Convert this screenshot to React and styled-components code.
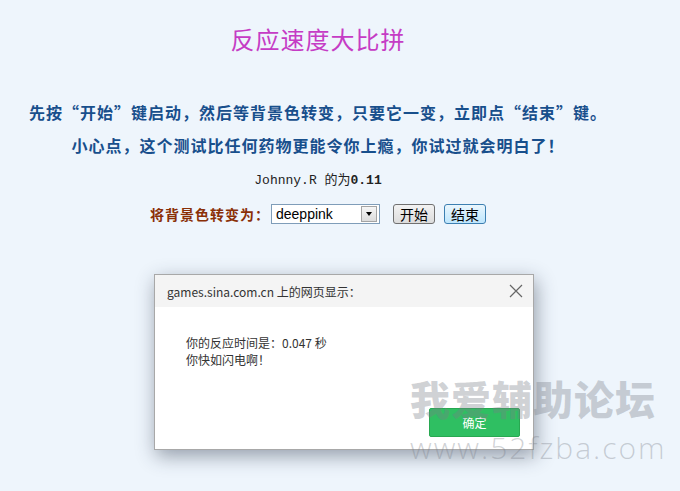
import React from "react";
import styled, { createGlobalStyle } from "styled-components";

const Global = createGlobalStyle`
  html, body { margin: 0; padding: 0; }
  body {
    background: #eef5fc;
    width: 680px;
    height: 491px;
    overflow: hidden;
    font-family: "Noto Sans CJK SC", sans-serif;
  }
`;

const Page = styled.div`
  position: relative;
  width: 680px;
  height: 491px;
`;

const Content = styled.div`
  width: 636px;
  padding-top: 25px;
  text-align: center;
`;

const Title = styled.h1`
  margin: 0;
  font-size: 24px;
  line-height: 28px;
  font-weight: 400;
  letter-spacing: 1px;
  color: #c53cc5;
  font-family: "Noto Sans CJK SC", sans-serif;
`;

const Notice = styled.p`
  margin: ${(p) => p.$top}px 0 0;
  font-size: 16px;
  line-height: 20px;
  font-weight: 700;
  letter-spacing: 1px;
  color: #184f8c;
`;

const Record = styled.div`
  margin-top: 17px;
  font-size: 13px;
  line-height: 18px;
  color: #222;
  font-family: "Liberation Mono", "Noto Sans CJK SC", monospace;
`;

const Controls = styled.div`
  margin-top: 14px;
  display: flex;
  justify-content: center;
  align-items: center;
`;

const Label = styled.span`
  font-size: 14px;
  font-weight: 700;
  letter-spacing: 1px;
  color: #8a2f06;
  margin-right: 1px;
`;

const Select = styled.div`
  width: 107px;
  height: 18px;
  border: 1px solid #7f9db9;
  background: #fff;
  display: flex;
  align-items: center;
  box-sizing: content-box;
`;

const SelectText = styled.span`
  flex: 1;
  text-align: left;
  padding-left: 4px;
  font-family: "Liberation Sans", Arial, sans-serif;
  font-size: 14px;
  color: #000;
`;

const Arrow = styled.span`
  width: 14px;
  height: 14px;
  margin-right: 2px;
  border: 1px solid #a4a4a4;
  background: linear-gradient(#f6f6f6, #dcdcdc);
  display: flex;
  align-items: center;
  justify-content: center;
  &::after {
    content: "";
    border-left: 3px solid transparent;
    border-right: 3px solid transparent;
    border-top: 4px solid #000;
  }
`;

const Btn = styled.button`
  margin-left: ${(p) => p.$ml}px;
  height: 20px;
  padding: 0 6px;
  font-size: 14px;
  line-height: 16px;
  font-family: "Noto Sans CJK SC", sans-serif;
  color: #000;
  border: 1px solid ${(p) => (p.$active ? "#3c7fb1" : "#707070")};
  border-radius: 3px;
  background: ${(p) =>
    p.$active
      ? "linear-gradient(#eaf6fd, #bee6fd)"
      : "linear-gradient(#f2f2f2, #dcdcdc)"};
`;

const Dialog = styled.div`
  position: absolute;
  left: 154px;
  top: 274px;
  width: 380px;
  height: 176px;
  background: #fff;
  border: 1px solid #a8a8a8;
  box-sizing: border-box;
  box-shadow: 2px 6px 18px rgba(40, 50, 70, 0.45);
  display: flex;
  flex-direction: column;
  font-family: "Microsoft YaHei", "Noto Sans CJK SC", sans-serif;
`;

const DialogHead = styled.div`
  height: 32px;
  background: #f4f4f4;
  display: flex;
  align-items: center;
  justify-content: space-between;
  padding: 0 10px 0 12px;
  font-size: 12px;
  color: #333;
`;

const Close = styled.svg`
  width: 14px;
  height: 14px;
`;

const DialogBody = styled.div`
  flex: 1;
  padding: 27px 0 0 31px;
  font-size: 12px;
  line-height: 17px;
  color: #333;
`;

const DialogFoot = styled.div`
  display: flex;
  justify-content: flex-end;
  padding: 0 13px 12px 0;
`;

const Ok = styled.button`
  width: 91px;
  height: 29px;
  border: 1px solid #28a851;
  border-radius: 2px;
  background: #2fbf62;
  color: #fff;
  font-size: 12px;
  font-family: "Noto Sans CJK SC", sans-serif;
`;

const Watermark = styled.div`
  position: absolute;
  left: 410px;
  top: 372px;
  pointer-events: none;
  color: rgba(120, 125, 135, 0.35);
  display: flex;
  flex-direction: column;
  align-items: flex-start;
`;

const MarkCn = styled.span`
  font-size: 40px;
  line-height: 52px;
  font-weight: 900;
  letter-spacing: 1px;
`;

const MarkEn = styled.span`
  font-family: "Open Sans", sans-serif;
  font-weight: 300;
  font-size: 30px;
  line-height: 44px;
  letter-spacing: 2px;
  margin-top: 2px;
`;

export default function App() {
  return (
    <Page>
      <Global />
      <Content>
        <Title>反应速度大比拼</Title>
        <Notice $top={49}>
          先按“开始”键启动，然后等背景色转变，只要它一变，立即点“结束”键。
        </Notice>
        <Notice $top={13}>
          小心点，这个测试比任何药物更能令你上瘾，你试过就会明白了！
        </Notice>
        <Record>
          Johnny.R 的为<b>0.11</b>
        </Record>
        <Controls>
          <Label>将背景色转变为：</Label>
          <Select>
            <SelectText>deeppink</SelectText>
            <Arrow />
          </Select>
          <Btn $ml={13}>开始</Btn>
          <Btn $ml={9} $active>
            结束
          </Btn>
        </Controls>
      </Content>
      <Dialog>
        <DialogHead>
          <span>games.sina.com.cn 上的网页显示：</span>
          <Close viewBox="0 0 14 14">
            <path d="M1 1L13 13M13 1L1 13" stroke="#666" strokeWidth="1.2" fill="none" />
          </Close>
        </DialogHead>
        <DialogBody>
          <div>你的反应时间是：0.047 秒</div>
          <div>你快如闪电啊！</div>
        </DialogBody>
        <DialogFoot>
          <Ok>确定</Ok>
        </DialogFoot>
      </Dialog>
      <Watermark>
        <MarkCn>我爱辅助论坛</MarkCn>
        <MarkEn>www.52fzba.com</MarkEn>
      </Watermark>
    </Page>
  );
}
